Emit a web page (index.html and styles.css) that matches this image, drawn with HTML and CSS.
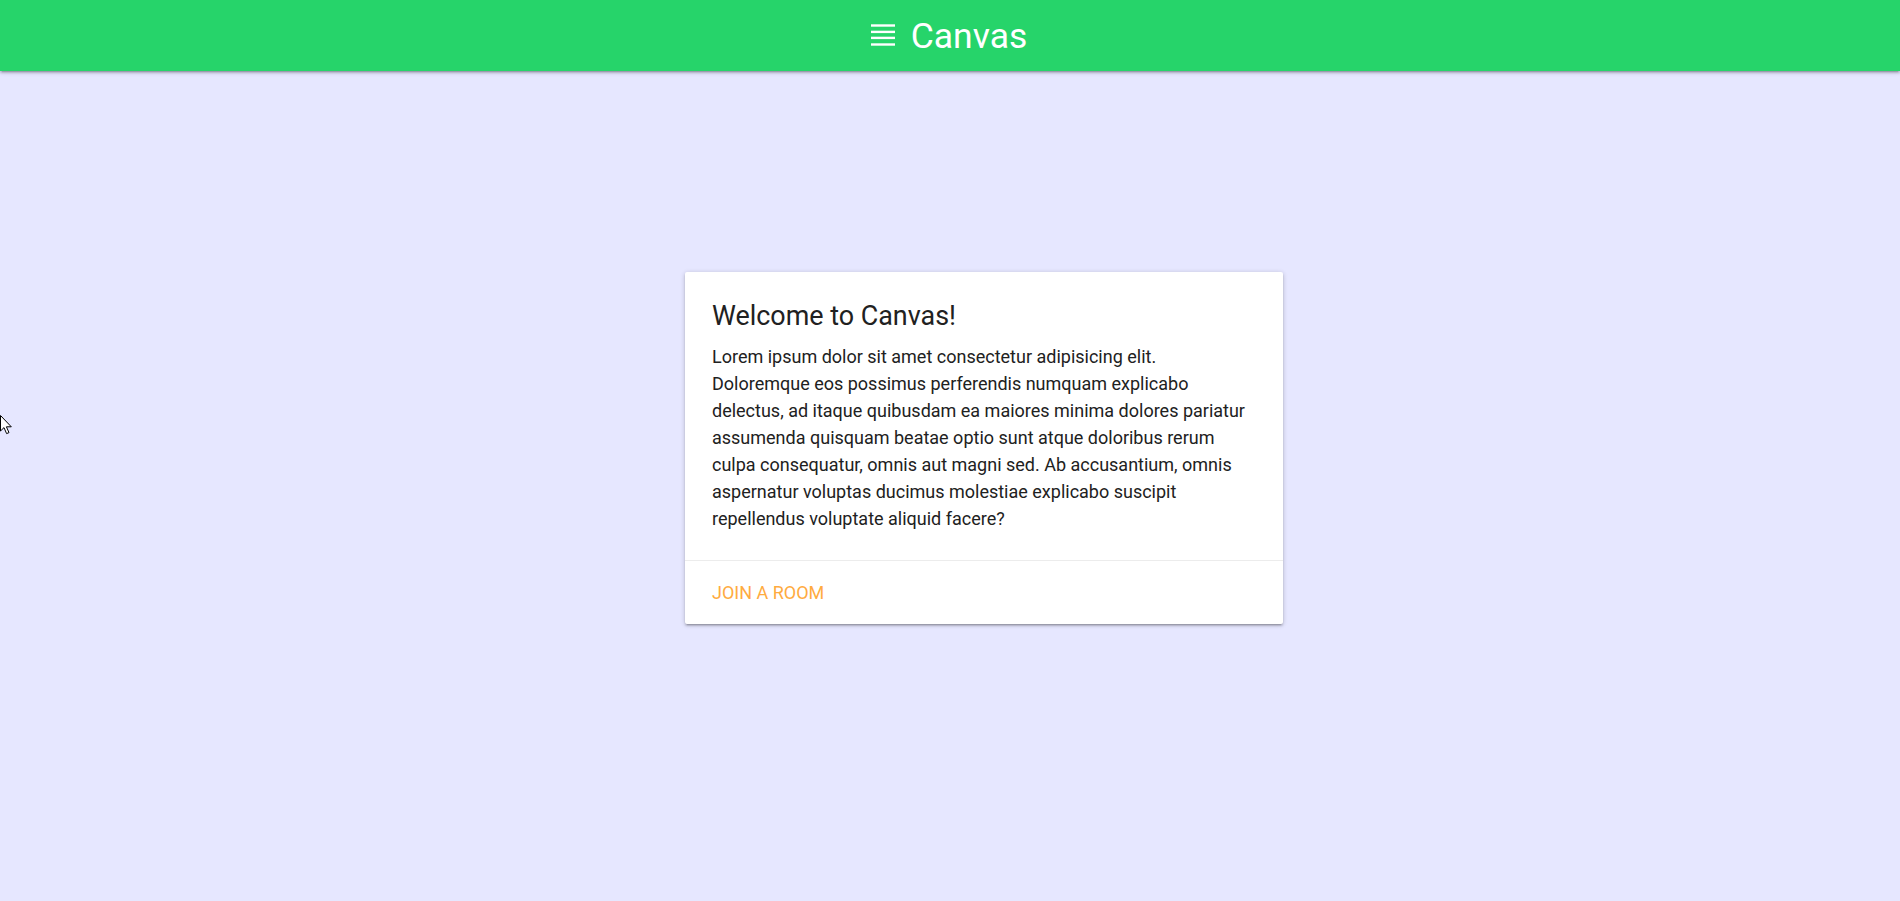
FILE: index.html
```html
<!DOCTYPE html>
<html lang="en">
<head>
<meta charset="utf-8">
<title>Canvas</title>
<link rel="stylesheet" href="styles.css">
</head>
<body>
<nav class="navbar">
  <a class="brand" href="#">
    <svg class="brand-icon" width="24" height="22" viewBox="0 0 24 22" aria-hidden="true">
      <rect x="0" y="0.3" width="24" height="2.4" fill="#fff"/>
      <rect x="0" y="6.7" width="24" height="2.4" fill="#fff"/>
      <rect x="0" y="12.7" width="24" height="2.4" fill="#fff"/>
      <rect x="0" y="19.3" width="24" height="2.4" fill="#fff"/>
    </svg>
    <span class="brand-text">Canvas</span>
  </a>
</nav>
<main class="page">
  <div class="card">
    <div class="card-content">
      <span class="card-title">Welcome to Canvas!</span>
      <p class="card-text">Lorem ipsum dolor sit amet consectetur adipisicing elit. Doloremque eos possimus perferendis numquam explicabo delectus, ad itaque quibusdam ea maiores minima dolores pariatur assumenda quisquam beatae optio sunt atque doloribus rerum culpa consequatur, omnis aut magni sed. Ab accusantium, omnis aspernatur voluptas ducimus molestiae explicabo suscipit repellendus voluptate aliquid facere?</p>
    </div>
    <div class="card-action">
      <a class="action-link" href="#">Join a room</a>
    </div>
  </div>
</main>
<svg class="cursor" width="13" height="20" viewBox="0 0 13 20" aria-hidden="true">
  <path d="M0.5 0.5 L0.5 16 L4 12.6 L6.6 18.6 L9 17.6 L6.4 11.8 L11.3 11.8 Z" fill="#fff" stroke="#000" stroke-width="1" stroke-linejoin="round"/>
</svg>
</body>
</html>
```
FILE: styles.css
```css
html, body {
  margin: 0;
  padding: 0;
}
body {
  background: #e6e7ff;
  font-family: Roboto, "Liberation Sans", Arial, sans-serif;
  color: rgba(0, 0, 0, 0.87);
  min-height: 901px;
  position: relative;
}
.navbar {
  height: 71px;
  background: #26d46a;
  display: flex;
  align-items: center;
  justify-content: center;
  box-shadow: 0 2px 2px 0 rgba(0,0,0,0.14), 0 3px 1px -2px rgba(0,0,0,0.12), 0 1px 5px 0 rgba(0,0,0,0.2);
  position: relative;
  z-index: 1;
}
.brand {
  display: flex;
  align-items: center;
  gap: 16px;
  color: #fff;
  text-decoration: none;
  margin-left: -2px;
}
.brand-icon {
  display: block;
  margin-top: -1px;
}
.brand-text {
  font-size: 35.5px;
  line-height: 40px;
  font-weight: 400;
}
.page {
  padding: 201px 0 0 685px;
}
.card {
  width: 598px;
  background: #fff;
  border-radius: 2px;
  box-shadow: 0 2px 2px 0 rgba(0,0,0,0.14), 0 3px 1px -2px rgba(0,0,0,0.12), 0 1px 5px 0 rgba(0,0,0,0.2);
}
.card-content {
  padding: 27px 27px 28px;
}
.card-title {
  display: block;
  font-size: 26.9px;
  line-height: 35px;
  font-weight: 400;
  color: #212121;
  margin-bottom: 9px;
}
.card-text {
  margin: 0;
  font-size: 18px;
  line-height: 27px;
  color: #212121;
}
.card-action {
  border-top: 1px solid rgba(160, 160, 160, 0.2);
  padding: 18px 27px;
}
.action-link {
  display: block;
  font-size: 18px;
  line-height: 27px;
  color: #ffab40;
  text-transform: uppercase;
  text-decoration: none;
}
.cursor {
  position: absolute;
  left: 0;
  top: 415px;
}
```
